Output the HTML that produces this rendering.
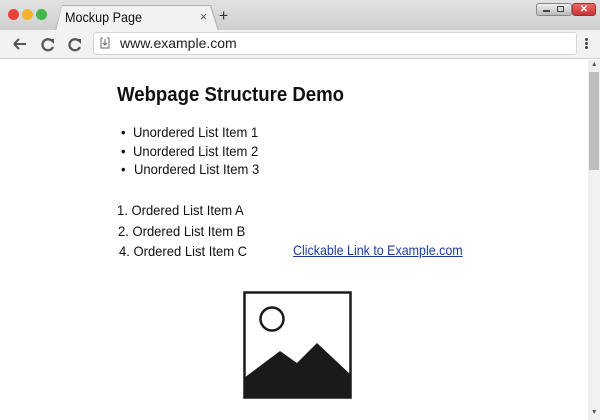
<!DOCTYPE html>
<html><head><style>
*{margin:0;padding:0;box-sizing:border-box}
body{width:600px;height:420px;overflow:hidden;background:#fff;font-family:"Liberation Sans",sans-serif;position:relative}
.top{position:absolute;left:0;top:0;width:600px;height:31px;background:linear-gradient(#e2e2e2,#cfcfcf);border-bottom:1px solid #bbb}
.tab{position:absolute;left:56px;top:6px;width:162px;height:25px;background:#f2f2f2;clip-path:polygon(0 100%,6px 0,154px 0,162px 100%)}
.bar{position:absolute;left:0;top:30px;width:600px;height:29px;background:#f2f2f2;border-bottom:1px solid #cfcfcf}
.addr{position:absolute;left:93px;top:32px;width:484px;height:23px;background:#fff;border:1px solid #d6d6d6;border-radius:3px}
.t{position:absolute;color:#111;white-space:nowrap;transform-origin:0 0;transform:scaleX(.93)}
.dot{position:absolute;top:9px;width:11px;height:11px;border-radius:50%}
</style></head><body>
<div class="top"></div>
<div class="dot" style="left:8px;background:#e8443a"></div>
<div class="dot" style="left:22px;background:#f3b42c"></div>
<div class="dot" style="left:36px;background:#43b749"></div>
<div style="position:absolute;left:55px;top:5px;width:164px;height:26px;background:#b0b0b0;clip-path:polygon(0 100%,7px 0,156px 0,164px 100%)"></div>
<div class="tab"></div>
<div class="t" style="left:65px;top:9px;font-size:14px;transform:scaleX(.9)">Mockup Page</div>
<div class="t" style="left:200px;top:9px;font-size:13px;color:#555">×</div>
<div class="t" style="left:219px;top:6px;font-size:17px;color:#333">+</div>
<div style="position:absolute;left:536px;top:3px;width:36px;height:13px;background:linear-gradient(#eee,#bbb);border:1px solid #888;border-radius:3px"></div>
<div style="position:absolute;left:543px;top:10px;width:7px;height:2px;background:#444"></div>
<div style="position:absolute;left:557px;top:6px;width:7px;height:6px;border:1px solid #444"></div>
<div style="position:absolute;left:572px;top:3px;width:24px;height:13px;background:linear-gradient(#e66,#c33);border:1px solid #933;border-radius:3px;color:#fff;font-size:10px;text-align:center;line-height:11px;font-weight:bold">✕</div>
<div class="bar"></div>
<div class="addr"></div>
<svg style="position:absolute;left:0;top:30px" width="100" height="29">
<path d="M14 14h12M14 14l5-5M14 14l5 5" stroke="#555" stroke-width="2" fill="none"/>
<path d="M52 11a5.5 5.5 0 1 0 1 6" stroke="#555" stroke-width="2.2" fill="none"/><path d="M49 9l5 0 0 5z" fill="#555"/>
<path d="M79 11a5.5 5.5 0 1 0 1 6" stroke="#555" stroke-width="2.2" fill="none"/><path d="M76 9l5 0 0 5z" fill="#555"/>
</svg>
<svg style="position:absolute;left:98px;top:35px" width="14" height="16"><path d="M3 3h2M9 3h2v10H3V3" stroke="#666" fill="none"/><path d="M7 4v6M5 8l2 2 2-2" stroke="#666" fill="none"/></svg>
<div class="t" style="left:120px;top:35px;font-size:14px;color:#222;transform:none">www.example.com</div>
<div style="position:absolute;left:585px;top:38px;width:3px;height:3px;background:#444;border-radius:50%;box-shadow:0 4px 0 #444,0 8px 0 #444"></div>
<div style="position:absolute;left:588px;top:60px;width:12px;height:360px;background:#f0f0f0"></div>
<div style="position:absolute;left:589px;top:72px;width:10px;height:98px;background:#bdbdbd"></div>
<div class="t" style="left:591px;top:61px;font-size:7px;color:#555">▲</div>
<div class="t" style="left:591px;top:409px;font-size:7px;color:#555">▼</div>
<div class="t" style="left:117px;top:84px;font-size:20px;font-weight:bold">Webpage Structure Demo</div>
<div class="t" style="left:121px;top:124px;font-size:14px">•</div>
<div class="t" style="left:121px;top:143px;font-size:14px">•</div>
<div class="t" style="left:121px;top:161px;font-size:14px">•</div>
<div class="t" style="left:133px;top:124px;font-size:14px">Unordered List Item 1</div>
<div class="t" style="left:133px;top:143px;font-size:14px">Unordered List Item 2</div>
<div class="t" style="left:134px;top:161px;font-size:14px">Unordered List Item 3</div>
<div class="t" style="left:117px;top:202px;font-size:14px">1. Ordered List Item A</div>
<div class="t" style="left:118px;top:223px;font-size:14px">2. Ordered List Item B</div>
<div class="t" style="left:119px;top:243px;font-size:14px">4. Ordered List Item C</div>
<div class="t" style="left:293px;top:242px;font-size:14px;color:#1a3d9c;text-decoration:underline;transform:scaleX(.89)">Clickable Link to Example.com</div>
<svg style="position:absolute;left:243px;top:291px" width="110" height="110">
<rect x="1.5" y="1.5" width="106" height="105" fill="#fff" stroke="#1a1a1a" stroke-width="2.5"/>
<circle cx="29" cy="28" r="11.5" fill="none" stroke="#1a1a1a" stroke-width="2.5"/>
<path d="M1 87L37 60L54 72L74 52L108 84V107H1Z" fill="#1a1a1a"/>
</svg>
</body></html>
